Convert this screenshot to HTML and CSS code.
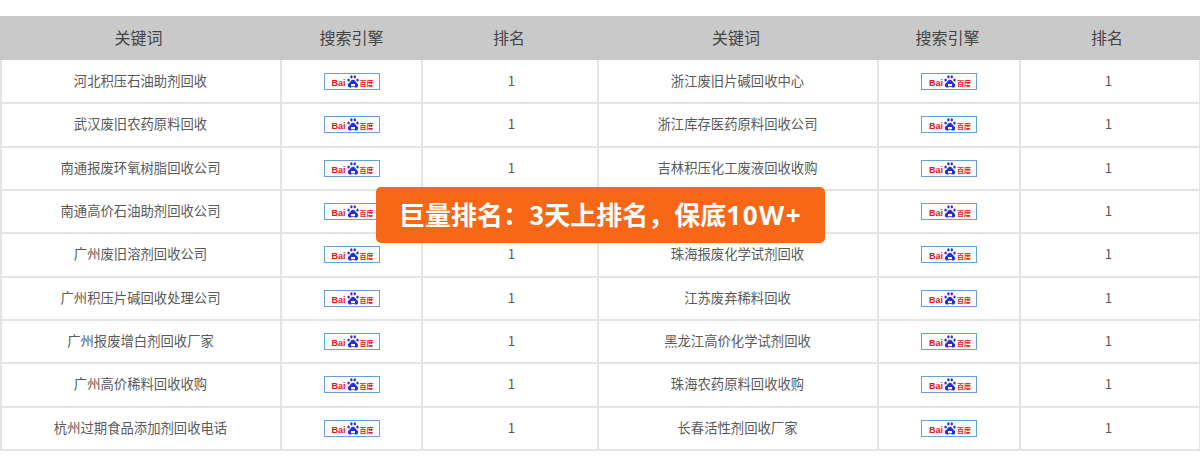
FILE: index.html
```html
<!DOCTYPE html>
<html lang="zh-CN">
<head>
<meta charset="utf-8">
<title>巨量排名</title>
<link rel="stylesheet" href="styles.css">
</head>
<body>
<svg class="defs" width="0" height="0" aria-hidden="true">
  <symbol id="paw" viewBox="0 0 12 13">
    <g fill="#2a2fd0">
      <ellipse cx="1.600" cy="5" rx="1.200" ry="1.600"/>
      <ellipse cx="4.400" cy="1.800" rx="1.200" ry="1.600"/>
      <ellipse cx="7.800" cy="1.800" rx="1.200" ry="1.600"/>
      <ellipse cx="10.500" cy="5" rx="1.200" ry="1.600"/>
      <path d="M6 4.800c-1.800 0-2.300 1.900-3.600 3C1 8.900.6 9.900 1 11c.5 1.400 2 1.800 3 1.400 1.400-.4 2.700-.4 4.100 0 1.100.4 2.600 0 3-1.400.3-1.100-.2-2.100-1.500-3.200C8.300 6.700 7.800 4.800 6 4.800zM4 9h4v2.300H4z" fill-rule="evenodd"/>
    </g>
  </symbol>
</svg>
<main class="board">
<table class="rank">
  <colgroup>
    <col class="c-kw"><col class="c-eng"><col class="c-rank"><col class="c-kw"><col class="c-eng2"><col class="c-rank2">
  </colgroup>
  <thead>
    <tr><th>关键词</th><th>搜索引擎</th><th>排名</th><th>关键词</th><th>搜索引擎</th><th>排名</th></tr>
  </thead>
  <tbody>
    <tr><td>河北积压石油助剂回收</td><td><span class="logo"><span class="en">Bai</span><svg class="paw"><use href="#paw"/></svg><span class="cn">百度</span></span></td><td>1</td><td>浙江废旧片碱回收中心</td><td><span class="logo"><span class="en">Bai</span><svg class="paw"><use href="#paw"/></svg><span class="cn">百度</span></span></td><td>1</td></tr>
    <tr><td>武汉废旧农药原料回收</td><td><span class="logo"><span class="en">Bai</span><svg class="paw"><use href="#paw"/></svg><span class="cn">百度</span></span></td><td>1</td><td>浙江库存医药原料回收公司</td><td><span class="logo"><span class="en">Bai</span><svg class="paw"><use href="#paw"/></svg><span class="cn">百度</span></span></td><td>1</td></tr>
    <tr><td>南通报废环氧树脂回收公司</td><td><span class="logo"><span class="en">Bai</span><svg class="paw"><use href="#paw"/></svg><span class="cn">百度</span></span></td><td>1</td><td>吉林积压化工废液回收收购</td><td><span class="logo"><span class="en">Bai</span><svg class="paw"><use href="#paw"/></svg><span class="cn">百度</span></span></td><td>1</td></tr>
    <tr><td>南通高价石油助剂回收公司</td><td><span class="logo"><span class="en">Bai</span><svg class="paw"><use href="#paw"/></svg><span class="cn">百度</span></span></td><td></td><td></td><td><span class="logo"><span class="en">Bai</span><svg class="paw"><use href="#paw"/></svg><span class="cn">百度</span></span></td><td>1</td></tr>
    <tr><td>广州废旧溶剂回收公司</td><td><span class="logo"><span class="en">Bai</span><svg class="paw"><use href="#paw"/></svg><span class="cn">百度</span></span></td><td>1</td><td>珠海报废化学试剂回收</td><td><span class="logo"><span class="en">Bai</span><svg class="paw"><use href="#paw"/></svg><span class="cn">百度</span></span></td><td>1</td></tr>
    <tr><td>广州积压片碱回收处理公司</td><td><span class="logo"><span class="en">Bai</span><svg class="paw"><use href="#paw"/></svg><span class="cn">百度</span></span></td><td>1</td><td>江苏废弃稀料回收</td><td><span class="logo"><span class="en">Bai</span><svg class="paw"><use href="#paw"/></svg><span class="cn">百度</span></span></td><td>1</td></tr>
    <tr><td>广州报废增白剂回收厂家</td><td><span class="logo"><span class="en">Bai</span><svg class="paw"><use href="#paw"/></svg><span class="cn">百度</span></span></td><td>1</td><td>黑龙江高价化学试剂回收</td><td><span class="logo"><span class="en">Bai</span><svg class="paw"><use href="#paw"/></svg><span class="cn">百度</span></span></td><td>1</td></tr>
    <tr><td>广州高价稀料回收收购</td><td><span class="logo"><span class="en">Bai</span><svg class="paw"><use href="#paw"/></svg><span class="cn">百度</span></span></td><td>1</td><td>珠海农药原料回收收购</td><td><span class="logo"><span class="en">Bai</span><svg class="paw"><use href="#paw"/></svg><span class="cn">百度</span></span></td><td>1</td></tr>
    <tr><td>杭州过期食品添加剂回收电话</td><td><span class="logo"><span class="en">Bai</span><svg class="paw"><use href="#paw"/></svg><span class="cn">百度</span></span></td><td>1</td><td>长春活性剂回收厂家</td><td><span class="logo"><span class="en">Bai</span><svg class="paw"><use href="#paw"/></svg><span class="cn">百度</span></span></td><td>1</td></tr>
  </tbody>
</table>
<div class="banner">巨量排名<span class="punct">：</span>3天上排名<span class="punct">，</span>保底<span class="num">10W+</span></div>
</main>
</body>
</html>
```
FILE: styles.css
```css
* { box-sizing: border-box; }
html, body { margin: 0; padding: 0; background: #fff; }
body { font-family: "Noto Sans CJK SC", "Liberation Sans", sans-serif; width: 1200px; height: 460px; overflow: hidden; }
.defs { position: absolute; }
.board { position: relative; padding-top: 16px; }
.rank { border-collapse: collapse; table-layout: fixed; width: 1199px; color: #5a5a5a; }
.c-kw { width: 280px; }
.c-eng { width: 141px; }
.c-rank { width: 176px; }
.c-eng2 { width: 142px; }
.c-rank2 { width: 180px; }
.rank th { background: #c9c9c9; height: 44px; padding: 0 0 2px; font-size: 16px; font-weight: 400; color: #444; text-align: center; }
.rank th:first-child { box-shadow: -1px 0 #c9c9c9; padding-right: 5px; }
.rank th:nth-child(3) { padding-right: 2px; }
.rank th:nth-child(4) { padding-right: 4px; }
.rank th:nth-child(5) { padding-right: 3px; }
.rank th:last-child { box-shadow: 1px 0 #c9c9c9; padding-right: 6px; }
.rank td { height: 43.33px; padding: 0 0 2px; border: 2px solid #e4e4e4; font-size: 13.330px; text-align: center; vertical-align: middle; }
.rank tbody tr:first-child td { border-top: 0; }
.rank td:first-child, .rank td:nth-child(4) { padding-right: 1px; }
.rank td:nth-child(3) { padding-left: 3px; }
.rank td:last-child { padding-right: 3px; }
.logo { display: flex; align-items: flex-end; width: 56px; height: 17px; margin: 2px auto 0; padding: 0 0 1px 7px; border: 1px solid #6a9fdc; background: #fff; line-height: 1; overflow: hidden; }
.logo .en { width: 15px; font: 700 9px/10px "Liberation Sans", sans-serif; color: #e1141c; text-align: left; }
.logo .cn { margin-left: 1px; font: 700 7px/9px "Noto Sans CJK SC", sans-serif; color: #e1141c; }
.paw { display: block; flex: none; width: 12px; height: 13px; }
.banner { position: absolute; left: 376px; top: 187px; width: 449px; height: 56px; border-radius: 5px; background: #f66718; color: #fff; font-size: 26px; font-weight: 700; line-height: 54px; text-align: center; white-space: nowrap; }
.punct { font-family: "Noto Sans CJK TC", sans-serif; }
.num { font-family: "Open Sans", sans-serif; letter-spacing: 1.500px; }
```
